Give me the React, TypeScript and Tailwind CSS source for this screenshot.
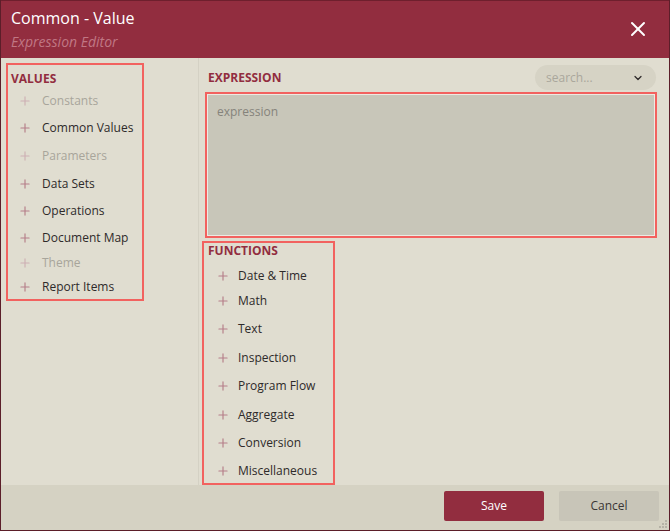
import { X, ChevronDown, Plus } from "lucide-react";

const values = [
  { label: "Constants", h: "h-[27px]", off: true },
  { label: "Common Values", h: "h-[28px]" },
  { label: "Parameters", h: "h-[28px]", off: true },
  { label: "Data Sets", h: "h-[27px]" },
  { label: "Operations", h: "h-[28px]" },
  { label: "Document Map", h: "h-[26px]" },
  { label: "Theme", h: "h-[23px]", off: true },
  { label: "Report Items", h: "h-[26px]" },
];

const functions = [
  { label: "Date & Time", h: "h-[25px]" },
  { label: "Math", h: "h-[26px]" },
  { label: "Text", h: "h-[29px]" },
  { label: "Inspection", h: "h-[29px]" },
  { label: "Program Flow", h: "h-[28px]" },
  { label: "Aggregate", h: "h-[29px]" },
  { label: "Conversion", h: "h-[28px]" },
  { label: "Miscellaneous", h: "h-[28px]" },
];

function Item({ label, h, off, gap }: { label: string; h: string; off?: boolean; gap: string }) {
  return (
    <div className={`flex items-center shrink-0 ${h}`}>
      <Plus size={14} strokeWidth={2} className={off ? "text-[#cdb0b4]" : "text-[#b57f89]"} />
      <span className={`${gap} text-[12px] ${off ? "text-[#a8a59b]" : "text-[#2e2a2a]"}`}>{label}</span>
    </div>
  );
}

export default function App() {
  return (
    <div className="w-[670px] h-[531px] flex flex-col border-x border-b border-[#5b1e29] bg-[#e0ddd0] font-['Open_Sans',sans-serif]">
      {/* header */}
      <div className="h-[58px] shrink-0 bg-[#922d3f] border-t border-[#6e1f2d] flex items-start justify-between pl-[10px] pr-[19px]">
        <div className="flex flex-col">
          <div className="text-white text-[16px] leading-[22px] mt-[6px]">Common - Value</div>
          <div className="text-[#c07784] italic text-[14px] leading-[20px] mt-[3px]">Expression Editor</div>
        </div>
        <X size={24} strokeWidth={2} className="text-white mt-[16px]" />
      </div>

      {/* body */}
      <div className="flex flex-1 min-h-0">
        {/* values */}
        <div className="w-[198px] shrink-0 border-r border-[#d4d1c4] pt-[5px] pl-[5px]">
          <div className="w-[138px] h-[238px] border-2 border-[#f2625f] pl-[3px]">
            <div className="text-[12px] font-bold text-[#922d3f] leading-[16px] mt-[6px]">VALUES</div>
            <div className="pl-[7px]">
              {values.map((v) => (
                <Item key={v.label} {...v} gap="ml-[10px]" />
              ))}
            </div>
          </div>
        </div>

        {/* expression + functions */}
        <div className="flex-1 min-h-0 flex flex-col pl-[6px] pr-[12px]">
          <div className="shrink-0 flex items-center justify-between h-[34px] pt-[5px] pl-[3px]">
            <div className="text-[12px] font-bold text-[#922d3f] leading-[16px]">EXPRESSION</div>
            <div className="w-[121px] h-[25px] rounded-full bg-[#d6d3c5] flex items-center justify-between pl-[11px] pr-[12px] mr-[1px]">
              <span className="text-[12px] text-[#aaa79c]">search...</span>
              <ChevronDown size={12} strokeWidth={2.5} className="text-[#2e2a2a]" />
            </div>
          </div>
          <div className="shrink-0 h-[146px] border-2 border-[#f2625f]">
            <div className="h-full border border-[#eceae3] bg-[#c8c6b9] px-[9px] pt-[3px]">
              <span className="text-[12px] text-[#85837b]">expression</span>
            </div>
          </div>
          <div className="mt-[3px] -ml-[3px] w-[133px] flex-1 min-h-0 overflow-hidden border-2 border-[#f2625f] pl-[4px] flex flex-col">
            <div className="text-[12px] font-bold text-[#922d3f] leading-[16px] shrink-0">FUNCTIONS</div>
            <div className="pl-[8px] mt-[4px] flex flex-col">
              {functions.map((f) => (
                <Item key={f.label} {...f} gap="ml-[8px]" />
              ))}
            </div>
          </div>
        </div>
      </div>

      {/* footer */}
      <div className="h-[45px] shrink-0 bg-[#d5d2c3] flex items-start justify-end gap-[15px] pt-[6px] pr-[10px] relative">
        <button className="w-[100px] h-[30px] rounded-[2px] bg-[#922d3f] text-white text-[12px]">Save</button>
        <button className="w-[100px] h-[30px] rounded-[2px] bg-[#c8c5b8] text-[#3a3636] text-[12px]">Cancel</button>
        <div className="absolute right-[2px] bottom-[2px] grid grid-cols-3 gap-[1px]">
          <span className="w-[2px] h-[2px]" />
          <span className="w-[2px] h-[2px]" />
          <span className="w-[2px] h-[2px] bg-[#b5b2a6]" />
          <span className="w-[2px] h-[2px]" />
          <span className="w-[2px] h-[2px] bg-[#b5b2a6]" />
          <span className="w-[2px] h-[2px] bg-[#b5b2a6]" />
          <span className="w-[2px] h-[2px] bg-[#b5b2a6]" />
          <span className="w-[2px] h-[2px] bg-[#b5b2a6]" />
          <span className="w-[2px] h-[2px] bg-[#b5b2a6]" />
        </div>
      </div>
    </div>
  );
}
